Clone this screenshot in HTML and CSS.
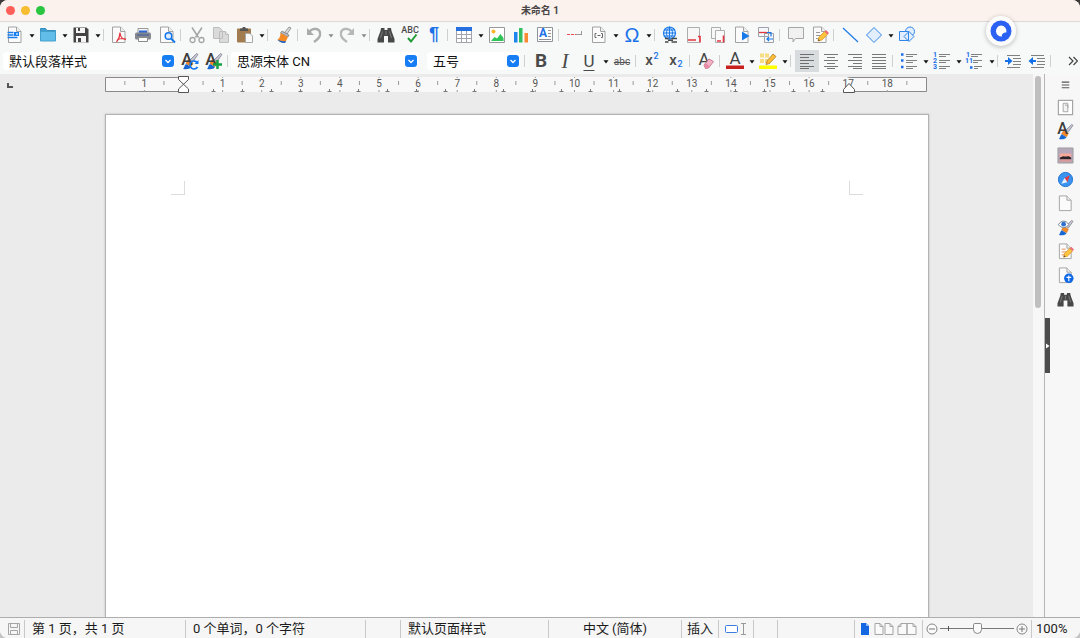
FILE: index.html
```html
<!DOCTYPE html>
<html lang="zh-CN">
<head>
  <meta charset="UTF-8" />
  <meta name="viewport" content="width=device-width, initial-scale=1.0"/>
  <title>未命名 1</title>
  <link rel="stylesheet" href="styles.css">
</head>
<body>

<!-- shared shapes -->
<svg class="sprite" aria-hidden="true">
  <symbol id="doc" viewBox="0 0 18 18"><path d="M2.500 1h8l4.500 4.500v11h-12.500z" fill="#fbfbfb" stroke="#a2a2a2"/><path d="M10.500 1v4.500h4.500" fill="#eee" stroke="#a2a2a2"/></symbol>
  <symbol id="caret" viewBox="0 0 6 4"><path d="M.5.3h5L3 3.500z" fill="currentColor"/></symbol>
  <symbol id="chevron" viewBox="0 0 12 12"><path d="M3.500 5L6 7.500 8.500 5" fill="none" stroke="#fff" stroke-width="1.300"/></symbol>
  <symbol id="brush" viewBox="0 0 18 18"><path d="M15.500 1.500l1.500 1-5 7-2.500-2z" fill="#c5c5d0" stroke="#77778a" stroke-width=".7"/><path d="M7.500 7.500l4.500 3.500-2 3.500-5-3z" fill="#f58b24" stroke="#c9661a" stroke-width=".6"/><path d="M5 12l5 3c-1 2-4 2.500-8 2 1.500-1 1-3.500 3-5z" fill="#1766d2"/></symbol>
  <symbol id="pencil" viewBox="0 0 18 18"><path d="M7 15l1-4L13.500 5.500l3 3-5.500 5.500z" fill="#fbc43c" stroke="#e0952a" stroke-width=".8"/><path d="M13.500 5.500l1.500-1.500 3 3L16.500 8.500z" fill="#ee6b7a"/><path d="M7 15l.5-2 1.500 1.500z" fill="#5d4a35"/></symbol>
  <symbol id="binoculars" viewBox="0 0 18 18"><path d="M4 2h3.500v2h3V2H14l.5 3 3 8v3.500h-6.500V10H7v6.500H.5V13l3-8z" fill="#484848"/><path d="M5.500 5.500L3.500 12M12.500 5.500l2 6.500M9 5v4" stroke="#858585" stroke-width=".8"/></symbol>
  <symbol id="lines-left" viewBox="0 0 18 18"><path d="M2 2.500h14M2 5.500h9M2 8.500h14M2 11.500h9M2 14.500h14M2 16.500h9" stroke="#6e6e6e"/></symbol>
  <symbol id="list-lines" viewBox="0 0 18 18"><path d="M6 2.500h11M6 4.500h7M6 8.500h11M6 10.500h7M6 14.500h11M6 16.500h7" stroke="#808080"/></symbol>
</svg>

<div class="window">
  <header class="titlebar">
    <div class="lights">
      <button class="light close" aria-label="关闭"></button>
      <button class="light minimize" aria-label="最小化"></button>
      <button class="light zoom" aria-label="缩放"></button>
    </div>
    <h1>未命名 1</h1>
  </header>

  <div class="toolbar" role="toolbar" aria-label="标准">
    <button class="tool" aria-label="新建"><svg viewBox="0 0 18 18"><use href="#doc"/><path d="M1.500 6.500h6M1.500 9h6M1.500 11.500h10" stroke="#187ef0" stroke-width="1.300"/><path d="M8 6h5v4H8z" fill="#187ef0"/><path d="M10 7h2v2h-2z" fill="#9ccbff"/></svg></button>
    <button class="drop" aria-label="新建选项"><svg><use href="#caret"/></svg></button>
    <button class="tool" aria-label="打开"><svg viewBox="0 0 18 18"><path d="M1.500 2.500h5l1.500 2h8.500v10h-15z" fill="#3f9fd5" stroke="#378fbe"/><path d="M1.500 5.500H16.500v9.500h-15z" fill="#62bde9" stroke="#439fca"/></svg></button>
    <button class="drop" aria-label="打开选项"><svg><use href="#caret"/></svg></button>
    <button class="tool" aria-label="保存"><svg viewBox="0 0 18 18"><path d="M1.500 1.500h13l2 2v13h-15z" fill="#444"/><path d="M4 2h9v5H4zM4 10h10v6.500H4z" fill="#f5f5f5"/><path d="M6 2h2v3H6zM6 12h3v4H6z" fill="#444"/></svg></button>
    <button class="drop" aria-label="保存选项"><svg><use href="#caret"/></svg></button>
    <span class="sep narrow"></span>
    <button class="tool" aria-label="导出为 PDF"><svg viewBox="0 0 18 18"><use href="#doc"/><path d="M10 6.500c0 4-1.500 7-3.500 9.500M10 7c.5 4 3 6.500 6 6.500M7 14c3-1.500 6-2 9-1" fill="none" stroke="#e5323b" stroke-width="1.200"/></svg></button>
    <button class="tool" aria-label="打印"><svg viewBox="0 0 18 18"><path d="M4 2.500h10v5H4z" fill="#f7f7f7" stroke="#999"/><path d="M5 4.500h8v3H5z" fill="#2d66d5"/><rect x="1" y="6.500" width="16" height="7" rx="1.500" fill="#85888f"/><path d="M3 9h12" stroke="#3c5a9c"/><path d="M4.500 11.500h9v4h-9z" fill="#fff" stroke="#8a8a8a"/></svg></button>
    <button class="tool" aria-label="打印预览"><svg viewBox="0 0 18 18"><use href="#doc"/><circle cx="10.500" cy="10" r="3.300" fill="#dcebff" stroke="#1576e8" stroke-width="1.500"/><path d="M13 12.500l4 4" stroke="#1576e8" stroke-width="2"/></svg></button>
    <span class="sep"></span>
    <button class="tool muted" aria-label="剪切"><svg viewBox="0 0 18 18"><path d="M4 1.500l6.500 10M14 1.500l-6.500 10" stroke="#a4a4a4" stroke-width="1.500"/><circle cx="4.500" cy="14" r="2.500" fill="none" stroke="#a4a4a4" stroke-width="1.300"/><circle cx="13.500" cy="14" r="2.500" fill="none" stroke="#a4a4a4" stroke-width="1.300"/></svg></button>
    <button class="tool muted" aria-label="复制"><svg viewBox="0 0 18 18"><path d="M1.500 1.500h6l3 3v8h-9zM7.500 5.500h6l3 3v8h-9z" fill="#dadada" stroke="#bdbdbd"/><path d="M13.500 5.500v3h3" fill="#eee" stroke="#bdbdbd"/></svg></button>
    <button class="tool" aria-label="粘贴"><svg viewBox="0 0 18 18"><rect x="1" y="2.500" width="14" height="14" rx="1" fill="#a17c4e"/><path d="M4 2.500h2l1-1.500h2l1 1.500h2V5H4z" fill="#555"/><path d="M9.500 7.500h4.500l2.500 2.500v6.500h-7z" fill="#fafafa" stroke="#a8a8a8"/></svg></button>
    <button class="drop" aria-label="粘贴选项"><svg><use href="#caret"/></svg></button>
    <span class="sep"></span>
    <button class="tool" aria-label="克隆格式"><svg viewBox="0 0 18 18"><path d="M14 1l2 1-4 6-2.500-1.500z" fill="#d7d7dd" stroke="#777" stroke-width=".7"/><path d="M7 5l7 4-1 2-7.500-4z" fill="#b9b9c2" stroke="#777" stroke-width=".7"/><path d="M5.500 7l7.500 4-3 6c-3 0-5-1-7.500-3 2-2 3-4 3-7z" fill="#f68b25"/><path d="M2.500 13.500c3 1.500 5 2 8.500 1.500l-1 2c-3 .3-6-1-7.500-3.500z" fill="#1766d2"/></svg></button>
    <span class="sep"></span>
    <button class="tool" aria-label="撤销"><svg viewBox="0 0 18 18"><path d="M4 6c4-5 12-4 11 3-.5 3-3 5-6 7" fill="none" stroke="#aaa" stroke-width="2.300"/><path d="M2 2v7h7z" fill="#aaa"/></svg></button>
    <button class="drop muted" aria-label="撤销选项"><svg><use href="#caret"/></svg></button>
    <button class="tool" aria-label="重做"><svg viewBox="0 0 18 18"><path d="M14 6C10 1 2 2 3 9c.5 3 3 5 6 7" fill="none" stroke="#b7b7b7" stroke-width="2.300"/><path d="M16 2v7H9z" fill="#b7b7b7"/></svg></button>
    <button class="drop muted" aria-label="重做选项"><svg><use href="#caret"/></svg></button>
    <span class="sep"></span>
    <button class="tool" aria-label="查找和替换"><svg><use href="#binoculars"/></svg></button>
    <button class="tool" aria-label="拼写"><svg viewBox="0 0 18 18"><text x="9" y="7" class="t-abc">ABC</text><path d="M7 12l3 3.500L15.500 8.500" fill="none" stroke="#219a38" stroke-width="2"/></svg></button>
    <button class="tool" aria-label="格式标记"><svg viewBox="0 0 18 18"><text x="9" y="14" class="t-mark">¶</text></svg></button>
    <span class="sep"></span>
    <button class="tool" aria-label="插入表格"><svg viewBox="0 0 18 18"><path d="M1.500 1.500h15v15h-15z" fill="#fff" stroke="#a0a5ad"/><path d="M1 1h16v4H1z" fill="#2470e0"/><path d="M1.500 8.500h15M1.500 12.500h15M6.500 5v11.500M11.500 5v11.500" stroke="#a0a5ad"/></svg></button>
    <button class="drop" aria-label="表格选项"><svg><use href="#caret"/></svg></button>
    <button class="tool" aria-label="图像"><svg viewBox="0 0 18 18"><path d="M1.500 1.500h15v15h-15z" fill="#fff" stroke="#999"/><circle cx="5.500" cy="5.500" r="2" fill="#fbb62c"/><path d="M3 15l3.500-4 2.500 1.500 3.500-4.500L15.500 12v3z" fill="#2fc457"/></svg></button>
    <button class="tool" aria-label="图表"><svg viewBox="0 0 18 18"><path d="M2 6h3.500v10.500H2z" fill="#1d86ee"/><path d="M7 2h3.500v14.500H7z" fill="#31bf62"/><path d="M12.500 7H16v9.500h-3.500z" fill="#f68b32"/></svg></button>
    <button class="tool" aria-label="文本框"><svg viewBox="0 0 18 18"><path d="M1.500 1.500h15v14h-15z" fill="#fff" stroke="#8f949b"/><text x="7" y="11" class="t-box">A</text><path d="M12 4.500h3M12 7.500h3M12 10.500h3M3 13.500h12" stroke="#8f949b"/></svg></button>
    <span class="sep"></span>
    <button class="tool" aria-label="分页符"><svg viewBox="0 0 18 18"><path d="M1 8.500h16" stroke="#e94b52" stroke-dasharray="3 1"/><path d="M10 8.500h5.500V5" fill="none" stroke="#999"/></svg></button>
    <button class="tool" aria-label="字段"><svg viewBox="0 0 18 18"><use href="#doc"/><path d="M6.500 7.500H5v4h1.500M11 7.500h1.500v4H11M7.500 9.500h3" fill="none" stroke="#666"/></svg></button>
    <button class="drop" aria-label="字段选项"><svg><use href="#caret"/></svg></button>
    <button class="tool" aria-label="特殊字符"><svg viewBox="0 0 18 18"><text x="9" y="16" class="t-omega">Ω</text></svg></button>
    <button class="drop" aria-label="特殊字符选项"><svg><use href="#caret"/></svg></button>
    <span class="sep narrow"></span>
    <button class="tool" aria-label="超链接"><svg viewBox="0 0 18 18"><circle cx="8.500" cy="7" r="6" fill="#e0f0ff" stroke="#1b78e8" stroke-width="1.200"/><path d="M2.500 7h12M3.500 4h10M3.500 10h10M8.500 1v12M8.500 1c-4 3-4 9 0 12M8.500 1c4 3 4 9 0 12" fill="none" stroke="#1b78e8"/><path d="M4 12.500h3.500M10.500 12.500H16M4 16h3.500M10.500 16H16M7 14.200h5" stroke="#494949" stroke-width="1.500"/></svg></button>
    <button class="tool" aria-label="脚注"><svg viewBox="0 0 18 18"><path d="M2.500 1.500h12v15h-12z" fill="#f7f7f7" stroke="#adadad"/><path d="M3 14h8M13 10.500h2V16.500" fill="none" stroke="#e43640" stroke-width="1.600"/></svg></button>
    <button class="tool" aria-label="尾注"><svg viewBox="0 0 18 18"><path d="M2.500 1.500h9v11h-9z" fill="#f7f7f7" stroke="#adadad"/><path d="M6.500 4.500h9v12h-9z" fill="#fafafa" stroke="#adadad"/><path d="M8 15h4M14.500 9.500v7" stroke="#e43640" stroke-width="1.600"/></svg></button>
    <button class="tool" aria-label="书签"><svg viewBox="0 0 18 18"><use href="#doc"/><path d="M9 5.500l7.500 4.500-7.500 4.500z" fill="#167be9"/></svg></button>
    <button class="tool" aria-label="交叉引用"><svg viewBox="0 0 18 18"><path d="M1.500 1.500h10v9h-10zM7.500 7.500h9v9h-9z" fill="#f5f7fa" stroke="#a0a0a8"/><path d="M2 6.500h8" stroke="#e43640" stroke-width="1.300"/><path d="M10 6.500h4v4M10 13h6M12 11l-2 2 2 2" fill="none" stroke="#1b78e8" stroke-width="1.200"/></svg></button>
    <span class="sep"></span>
    <button class="tool" aria-label="批注"><svg viewBox="0 0 18 18"><path d="M1.500 1.500h15v11H8.500L6 16v-3.500h-4.500z" fill="#f1f1f1" stroke="#a6a6a6"/></svg></button>
    <button class="tool" aria-label="显示修订"><svg viewBox="0 0 18 18"><use href="#doc"/><path d="M5 6.500h4M5 9.500h5M5 12.500h3" stroke="#999"/><use href="#pencil"/></svg></button>
    <span class="sep"></span>
    <button class="tool" aria-label="线条"><svg viewBox="0 0 18 18"><path d="M2 2l15 14" stroke="#1d7bea" stroke-width="1.200"/></svg></button>
    <button class="tool" aria-label="基本形状"><svg viewBox="0 0 18 18"><path d="M9 1.500L16.500 9 9 16.500 1.500 9z" fill="#e2eefb" stroke="#2f85e8"/></svg></button>
    <button class="drop" aria-label="形状选项"><svg><use href="#caret"/></svg></button>
    <button class="tool" aria-label="绘图功能"><svg viewBox="0 0 18 18"><circle cx="12" cy="5.500" r="4.500" fill="#e2eefb" stroke="#2f85e8"/><path d="M1.500 5.500h9v9h-9zM11 5.500l5 5-5 5-5-5z" fill="#e2eefb" stroke="#2f85e8"/></svg></button>
  </div>

  <div class="toolbar" role="toolbar" aria-label="格式">
    <div class="combo style-combo">
      <select aria-label="段落样式"><option>默认段落样式</option></select>
      <svg><use href="#chevron"/></svg>
    </div>
    <button class="tool" aria-label="更新样式"><svg viewBox="0 0 18 18"><use href="#brush"/><text x="6" y="13" class="t-style">A</text><path d="M16.500 11a4 4 0 1 0 0 4" fill="none" stroke="#1678ee" stroke-width="1.700"/><path d="M17.500 8v4h-4z" fill="#1678ee"/></svg></button>
    <button class="tool" aria-label="新建样式"><svg viewBox="0 0 18 18"><use href="#brush"/><text x="6" y="13" class="t-style">A</text><path d="M12.500 8v9M8 12.500h9" stroke="#17a042" stroke-width="2.500"/></svg></button>
    <span class="sep narrow"></span>
    <div class="combo font-combo">
      <select aria-label="字体名称"><option>思源宋体 CN</option></select>
      <svg><use href="#chevron"/></svg>
    </div>
    <div class="combo size-combo">
      <select aria-label="字号"><option>五号</option></select>
      <svg><use href="#chevron"/></svg>
    </div>
    <span class="sep"></span>
    <button class="tool letter bold" aria-label="粗体">B</button>
    <button class="tool letter italic" aria-label="斜体">I</button>
    <button class="tool letter underline" aria-label="下划线">U</button>
    <button class="drop" aria-label="下划线选项"><svg><use href="#caret"/></svg></button>
    <button class="tool strike" aria-label="删除线">abc</button>
    <span class="sep"></span>
    <button class="tool" aria-label="上标"><svg viewBox="0 0 18 18"><text x="6" y="13" class="t-x">x</text><text x="13" y="7" class="t-two">2</text></svg></button>
    <button class="tool" aria-label="下标"><svg viewBox="0 0 18 18"><text x="6" y="13" class="t-x">x</text><text x="13" y="15" class="t-two">2</text></svg></button>
    <span class="sep"></span>
    <button class="tool" aria-label="清除格式"><svg viewBox="0 0 18 18"><text x="7" y="13" class="t-a">A</text><path d="M7 13l5-6 4.500 2.500-5 6.500-3 .5z" fill="#f6b3c7" stroke="#b5637e" stroke-width=".8"/><path d="M7 13l1.500-2 4.500 3.500-1.500 1.500-3 .5z" fill="#e58ba8"/></svg></button>
    <span class="sep narrow"></span>
    <button class="tool" aria-label="字体颜色"><svg viewBox="0 0 18 18"><text x="9" y="12" class="t-a">A</text><path d="M0 13.500h18V17H0z" fill="#c9211e"/></svg></button>
    <button class="drop" aria-label="字体颜色选项"><svg><use href="#caret"/></svg></button>
    <button class="tool" aria-label="突出显示颜色"><svg viewBox="0 0 18 18"><path d="M1 1.500h4v4H1zM6 1.500h4v4H6zM1 7h4v4H1zM6 7h3v4H6z" fill="#f8dc82"/><path d="M7 12.500l1-3.500 6-7 3 2.500-6.500 7z" fill="#fcbd37" stroke="#b37a26" stroke-width=".8"/><path d="M0 13.500h18V17H0z" fill="#ff0"/></svg></button>
    <button class="drop" aria-label="突出显示选项"><svg><use href="#caret"/></svg></button>
    <span class="sep"></span>
    <button class="tool active" aria-label="左对齐" aria-pressed="true"><svg><use href="#lines-left"/></svg></button>
    <button class="tool" aria-label="居中"><svg viewBox="0 0 18 18"><path d="M2 2.500h14M5 5.500h8M2 8.500h14M5 11.500h8M2 14.500h14M5 16.500h8" stroke="#777"/></svg></button>
    <button class="tool" aria-label="右对齐"><svg viewBox="0 0 18 18"><path d="M2 2.500h14M7 5.500h9M2 8.500h14M7 11.500h9M2 14.500h14M7 16.500h9" stroke="#777"/></svg></button>
    <button class="tool" aria-label="两端对齐"><svg viewBox="0 0 18 18"><path d="M2 2.500h14M2 5.500h14M2 8.500h14M2 11.500h14M2 14.500h14M2 16.500h14" stroke="#777"/></svg></button>
    <span class="sep"></span>
    <button class="tool" aria-label="项目符号"><svg viewBox="0 0 18 18"><use href="#list-lines"/><path d="M1 2.500h2.500M1 8.500h2.500M1 15h2.500" stroke="#1b6ee8" stroke-width="2.500"/></svg></button>
    <button class="drop" aria-label="项目符号选项"><svg><use href="#caret"/></svg></button>
    <button class="tool" aria-label="编号"><svg viewBox="0 0 18 18"><use href="#list-lines"/><text x="2" y="5" class="t-num">1</text><text x="2" y="11" class="t-num">2</text><text x="2" y="17" class="t-num">3</text></svg></button>
    <button class="drop" aria-label="编号选项"><svg><use href="#caret"/></svg></button>
    <button class="tool" aria-label="大纲"><svg viewBox="0 0 18 18"><path d="M5 2.500h11M5 4.500h7M7 8.500h9M7 10.500h5M8 14.500h8M8 16.500h4" stroke="#808080"/><text x="2" y="5" class="t-num">1</text><text x="3" y="11" class="t-num">11</text><path d="M4 15.500h2.500" stroke="#1b6ee8" stroke-width="2.500"/></svg></button>
    <button class="drop" aria-label="大纲选项"><svg><use href="#caret"/></svg></button>
    <span class="sep narrow"></span>
    <button class="tool" aria-label="增加缩进"><svg viewBox="0 0 18 18"><path d="M3 3.500h13M9 6.500h8M9 9.500h8M9 12.500h8M3 15.500h13" stroke="#808080"/><path d="M1 8h3V5l4.500 4L4 13v-3H1z" fill="#136fe6"/></svg></button>
    <button class="tool" aria-label="减少缩进"><svg viewBox="0 0 18 18"><path d="M3 3.500h13M9 6.500h8M9 9.500h8M9 12.500h8M3 15.500h13" stroke="#808080"/><path d="M8 8H5V5L.5 9 5 13v-3h3z" fill="#136fe6"/></svg></button>
    <span class="sep"></span>
    <button class="more" aria-label="更多"><svg viewBox="0 0 10 10"><path d="M1 1l4 4-4 4M5.500 1l4 4-4 4" fill="none" stroke="#444" stroke-width="1.200"/></svg></button>
  </div>

  <main class="workspace">
    <div class="canvas">
      <div class="ruler-row">
        <svg class="tab-type" viewBox="0 0 6 6"><path d="M1 1v4h5" fill="none" stroke="#555" stroke-width="2"/></svg>
        <svg class="ruler" id="ruler" viewBox="0 0 822 18">
          <path d="M78 1h666v15H78z" fill="#f8f8f8"/>
          <path d="M78 1.500H.5v14H78M744 1.500h77.500v14H744" fill="#f8f8f8" stroke="#8a8a8a"/>
          <g id="rulerMarks"></g>
          <path d="M73.500.5h10v3L73.500 13v3.500h10V13L73.500 3.500z" fill="#fff" stroke="#555"/>
          <path d="M744 7.500l5.500 6v3h-11v-3z" fill="#fff" stroke="#555"/>
        </svg>
      </div>
      <article class="page" contenteditable="true" spellcheck="false" aria-label="文档">
        <div class="crops"><span class="crop left"></span><span class="crop right"></span></div>
      </article>
    </div>

    <div class="scrollbar"><div class="thumb"></div></div>

    <aside class="sidebar">
      <button class="side-toggle" aria-label="隐藏侧边栏"><svg viewBox="0 0 5 6"><path d="M1 .5v5L4.500 3z" fill="#fff"/></svg></button>
      <button class="side menu" aria-label="侧边栏设置"><svg viewBox="0 0 18 18"><path d="M5 6.500h8M5 9.500h8M5 12.500h8" stroke="#555" stroke-width="1.200"/></svg></button>
      <button class="side" aria-label="属性"><svg viewBox="0 0 18 18"><path d="M1.500 1.500h15v15h-15z" fill="#fff" stroke="#a5a5a5" stroke-width="1.300"/><path d="M6.500 4.500h5v9h-5zM8.500 6.500h3v3" fill="#f2f2f2" stroke="#a5a5a5"/></svg></button>
      <button class="side" aria-label="样式"><svg viewBox="0 0 18 18"><use href="#brush"/><text x="6" y="12" class="t-style">A</text></svg></button>
      <button class="side" aria-label="图库"><svg viewBox="0 0 18 18"><path d="M1 1h16v16H1z" fill="#b7a7bb" stroke="#9d9d9d"/><path d="M3 7h12v4H3z" fill="#f7a89a"/><path d="M3 11.500c2-1 3-2 5-1.500s4-1.500 7 1.500v2H3z" fill="#2a222b"/><path d="M3 13h12v2.500H3z" fill="#d99b9a"/></svg></button>
      <button class="side" aria-label="导航"><svg viewBox="0 0 18 18"><circle cx="9" cy="9" r="7.500" fill="#3b94f0" stroke="#1b70d0"/><path d="M13.500 4.500L11 12 8 7.500z" fill="#e33b42"/><path d="M8 7.500L11 12l-6.500 1.500z" fill="#e8f2ff"/></svg></button>
      <button class="side" aria-label="页面"><svg><use href="#doc"/></svg></button>
      <button class="side" aria-label="样式检查器"><svg viewBox="0 0 18 18"><use href="#brush"/><path d="M1.500 6c3-5 8-5 11 0-3 4-8 4-11 0z" fill="#fff" stroke="#6d7f96"/><circle cx="7" cy="5.500" r="2.500" fill="#2f70cf"/></svg></button>
      <button class="side" aria-label="修订管理"><svg viewBox="0 0 18 18"><use href="#doc"/><path d="M5 6.500h4M5 9.500h5M5 12.500h3" stroke="#e08c52"/><use href="#pencil"/></svg></button>
      <button class="side" aria-label="无障碍检查"><svg viewBox="0 0 18 18"><use href="#doc"/><circle cx="12.500" cy="12" r="5" fill="#0f68e6"/><path d="M10 11h5M12.500 9v6" stroke="#fff" stroke-width="1.200"/></svg></button>
      <button class="side" aria-label="查找"><svg><use href="#binoculars"/></svg></button>
    </aside>
  </main>

  <footer class="statusbar">
    <button class="cell save-state" aria-label="文档已保存"><svg viewBox="0 0 14 14"><path d="M1.500 1.500h11v11h-11zM3.500 1.500v4h7v-4M3.500 12.500v-4h7v4" fill="none" stroke="#a5a5a5"/></svg></button>
    <span class="cell pages">第 1 页，共 1 页</span>
    <span class="cell words">0 个单词，0 个字符</span>
    <span class="cell blank"></span>
    <span class="cell page-style">默认页面样式</span>
    <span class="cell language">中文 (简体)</span>
    <span class="cell insert">插入</span>
    <button class="cell selection" aria-label="标准选择"><svg viewBox="0 0 24 14"><rect x="1.500" y="3.500" width="12" height="7" rx="1" fill="#fff" stroke="#3b7de0"/><path d="M17 1.500h5M17 12.500h5M19.500 1.500v11" stroke="#999"/></svg></button>
    <span class="cell sign"></span>
    <span class="cell filler"></span>
    <div class="cell views">
      <button aria-label="单页视图"><svg class="one" viewBox="0 0 12 14"><path d="M2 1h5l3 3v9H2z" fill="#1568e2"/><path d="M7 1v3h3z" fill="#8fbcf8"/></svg></button>
      <button aria-label="多页视图"><svg viewBox="0 0 20 14"><path d="M1 1.500h5l3 3v8H1zM11 1.500h5l3 3v8h-8z" fill="#fafafa" stroke="#a5a5a5"/><path d="M6 1.500v3h3M16 1.500v3h3" fill="none" stroke="#a5a5a5"/></svg></button>
      <button aria-label="书本视图"><svg viewBox="0 0 20 14"><path d="M10 1.500v11H1v-8l3-3zM10 1.500v11h9v-8l-3-3z" fill="#fafafa" stroke="#a5a5a5"/><path d="M4 1.500v3H1M16 1.500v3h3" fill="none" stroke="#a5a5a5"/></svg></button>
    </div>
    <div class="cell zoomer">
      <button aria-label="缩小"><svg viewBox="0 0 12 12"><circle cx="6" cy="6" r="5" fill="#fafafa" stroke="#858585"/><path d="M3 6h6" stroke="#777"/></svg></button>
      <div class="track"><input type="range" min="0" max="100" value="50" aria-label="缩放"></div>
      <button aria-label="放大"><svg viewBox="0 0 12 12"><circle cx="6" cy="6" r="5" fill="#fafafa" stroke="#858585"/><path d="M3 6h6M6 3v6" stroke="#777"/></svg></button>
    </div>
    <span class="cell percent">100%</span>
  </footer>

  <button class="assistant" aria-label="助手"><svg viewBox="0 0 22 22"><circle cx="11" cy="11" r="10.500" fill="#2b62f3"/><path d="M11 5.500a5.500 5.500 0 1 0 1 11c-.5-2 1-4 4.300-4A5.500 5.500 0 0 0 11 5.500z" fill="#fff"/></svg></button>
</div>

<script>
  // 标尺：零点在左页边距处
  const origin = 78.5;
  const cm = 39.1;
  let marks = "";

  for (let n = -1; n <= 18; n++) {
    const x = origin + n * cm;
    if (n !== 0) {
      marks += `<text x="${x}" y="11">${Math.abs(n)}</text>`;
      marks += `<path d="M${x} 1v1M${x} 14v2"/>`;
    }
    marks += `<path d="M${x + cm / 2} 5v4"/>`;
  }
  marks += `<path d="M${origin - cm * 1.5} 5v4"/>`;

  // 默认制表位
  for (let i = 0; i < 22; i++) {
    marks += `<path class="tab" d="M${108 + i * 29}.5 13v3m-2 -.5h4"/>`;
  }

  document.getElementById("rulerMarks").innerHTML = marks;
</script>

</body>
</html>
```

FILE: styles.css
```css
* { box-sizing: border-box; }

body {
  margin: 0;
  font-family: Roboto, "Noto Sans CJK SC", sans-serif;
  font-size: 13px;
  color: #1c1c1c;
  background: linear-gradient(to bottom, #3b3a36 50%, #c4c4c4 50%);
}

button {
  padding: 0;
  border: none;
  background: none;
  color: inherit;
  font-family: inherit;
  display: flex;
  align-items: center;
  justify-content: center;
}

svg { display: block; }

.sprite {
  position: absolute;
  width: 0;
  height: 0;
}

.window {
  position: relative;
  display: flex;
  flex-direction: column;
  height: 100vh;
  border-radius: 8px;
  overflow: hidden;
  background: #f7f7f7;
}

/* title bar */
.titlebar {
  display: grid;
  grid-template-columns: 1fr auto 1fr;
  align-items: center;
  flex: 0 0 22px;
  padding: 0 6px;
  background: #fbf1ed;
  border-bottom: 1px solid #dcd9d7;
}

.titlebar h1 {
  margin: 0;
  font-size: 10px;
  line-height: 20px;
  font-weight: bold;
  color: #4a4645;
}

.lights {
  display: flex;
  gap: 6px;
}

.light {
  width: 9px;
  height: 9px;
  border-radius: 50%;
}

.close { background: #fe5f58; }
.minimize { background: #f8bc30; }
.zoom { background: #2ac541; }

/* toolbars */
.toolbar {
  display: flex;
  align-items: center;
  flex: 0 0 26px;
  padding: 0 2px 0 3px;
  background: #f7f8f8;
}

.tool {
  flex: 0 0 24px;
  height: 22px;
}

.tool svg {
  width: 18px;
  height: 18px;
}

.tool.active { background: #d8dcdf; }

.drop {
  flex: 0 0 9px;
  height: 22px;
  color: #111;
}

.drop svg {
  width: 6px;
  height: 4px;
  margin-top: 2px;
}

.drop.muted { color: #888; }

.sep {
  flex: 0 0 5px;
  height: 12px;
  margin-left: 1px;
  border-left: 1px solid #cfcfcf;
}

.sep.narrow { flex-basis: 4px; }

.combo {
  position: relative;
  height: 18px;
}

.combo select {
  appearance: none;
  width: 100%;
  height: 18px;
  padding: 0 20px 0 6px;
  border: none;
  border-radius: 4px;
  background: #fff;
  color: #111;
  font-family: inherit;
  font-size: 13px;
}

.combo svg {
  position: absolute;
  right: 1px;
  top: 3px;
  width: 12px;
  height: 12px;
  border-radius: 3px;
  background: #167df5;
  pointer-events: none;
}

.style-combo { flex: 0 0 172px; margin-right: 3px; }
.font-combo { flex: 0 0 187px; margin-right: 9px; }
.size-combo { flex: 0 0 93px; margin-right: 3px; }

.letter {
  font-size: 19px;
  line-height: 20px;
  color: #4a4a4a;
}

.bold { font-weight: bold; }
.italic { font-family: "Liberation Serif", serif; font-style: italic; font-size: 21px; }
.underline { font-size: 17px; text-decoration: underline 1px; text-underline-offset: 3px; }
.strike { font-size: 10px; color: #555; text-decoration: line-through; }

.more {
  margin-left: auto;
  width: 10px;
  height: 22px;
}

.more svg {
  width: 10px;
  height: 10px;
}

svg text { font-family: Roboto, sans-serif; text-anchor: middle; }
.t-abc { font-size: 9px; font-weight: 500; fill: #4a4a4a; }
svg .t-mark { font-family: "Liberation Sans", sans-serif; font-size: 18px; font-weight: bold; fill: #1a72e8; }
.t-box { font-size: 12px; font-weight: bold; fill: #1a72e8; }
svg .t-omega { font-family: "Liberation Sans", sans-serif; font-size: 20px; fill: #1a72e8; }
.t-style { font-size: 17px; font-weight: 500; fill: #3d3d3d; }
.t-x { font-size: 15px; font-weight: 500; fill: #4a4a4a; }
.t-two { font-size: 9px; font-weight: 500; fill: #1a72e8; }
.t-a { font-size: 17px; fill: #444; }
.t-num { font-size: 7px; font-weight: bold; fill: #1b6ee8; }

.tool svg, .side svg { overflow: visible; }

/* document area */
.workspace {
  display: flex;
  flex: 1;
  min-height: 0;
}

.canvas {
  flex: 1;
  display: flex;
  flex-direction: column;
  background: #ebebeb;
  overflow: hidden;
}

.ruler-row {
  display: grid;
  grid-template-columns: 1fr 824px 1fr;
  flex: 0 0 40px;
  padding-top: 2px;
}

.tab-type {
  width: 6px;
  height: 6px;
  margin: 6px 0 0 7px;
}

.ruler {
  width: 822px;
  height: 18px;
}

.ruler g path { fill: none; stroke: #9a9a9a; }
.ruler g .tab { stroke: #777; }
.ruler text { font-size: 10px; fill: #555; }

.page {
  flex: 1;
  width: 824px;
  margin: 0 auto;
  padding: 66px 65px;
  background: #fff;
  border: 1px solid #b3b3b3;
  border-bottom: none;
  box-shadow: 0 0 2px #bbb;
  outline: none;
}

.crops {
  display: flex;
  justify-content: space-between;
}

.crop {
  width: 14px;
  height: 14px;
  border-bottom: 1px solid #dcdcdc;
}

.crop.left { border-right: 1px solid #dcdcdc; }
.crop.right { border-left: 1px solid #dcdcdc; }

.scrollbar {
  flex: 0 0 11px;
  padding: 2px;
  background: #f7f7f7;
  border-right: 1px solid #b5b5b5;
}

.thumb {
  width: 6px;
  height: 43%;
  border-radius: 3px;
  background: #bfbfbf;
}

.sidebar {
  position: relative;
  flex: 0 0 35px;
  padding-left: 6px;
  background: #f7f7f7;
}

.scrollbar { flex-basis: 12px; padding-right: 3px; padding-left: 2px; }
.sidebar { flex-basis: 34px; padding-left: 5px; }

.side {
  width: 30px;
  height: 24px;
}

.side.menu { height: 21px; }

.side svg {
  width: 17px;
  height: 17px;
}

.side-toggle {
  position: absolute;
  left: 0;
  top: 45%;
  width: 5px;
  height: 55px;
  background: #4c4c4c;
}

.side-toggle svg {
  width: 5px;
  height: 6px;
}

/* status bar */
.statusbar {
  display: flex;
  align-items: center;
  flex: 0 0 21px;
  padding-top: 1px;
  border-top: 1px solid #adadad;
  background: #f6f6f6;
}

.cell {
  display: flex;
  align-items: center;
  height: 18px;
  padding: 0 7px;
  border-right: 1px solid #c9c9c9;
  line-height: 18px;
  white-space: nowrap;
}

.save-state { width: 25px; padding: 0 0 0 3px; }
.save-state svg { width: 14px; height: 14px; }
.pages { width: 161px; }
.words { width: 180px; }
.blank { width: 35px; }
.page-style { width: 148px; }
.language { width: 133px; justify-content: center; }
.insert { width: 37px; padding: 0 5px; }
.selection { width: 35px; }
.selection svg { width: 24px; height: 14px; flex: none; }
.sign { width: 24px; }
.filler { flex: 1; }

.views {
  width: 68px;
  padding: 0 4px;
  gap: 3px;
}

.views svg { width: 20px; height: 14px; }
.views .one { width: 12px; }

.zoomer {
  width: 109px;
  padding: 0 3px;
}

.zoomer svg { width: 12px; height: 12px; }

.track { flex: 1; }

.track input {
  appearance: none;
  display: block;
  width: 100%;
  height: 12px;
  margin: 0;
  background:
    linear-gradient(#555, #555) 10px center / 1px 5px no-repeat,
    linear-gradient(#777, #777) center / 74px 1px no-repeat;
}

.track input::-webkit-slider-thumb {
  appearance: none;
  width: 9px;
  height: 11px;
  border: 1px solid #8a8a8a;
  border-radius: 2px 2px 5px 5px;
  background: #fafafa;
}

.percent {
  width: 48px;
  padding: 0 4px;
  border-right: none;
}

/* floating assistant */
.assistant {
  position: absolute;
  right: 64px;
  top: 16px;
  width: 30px;
  height: 30px;
  border-radius: 50%;
  background: #fbfbfb;
  box-shadow: 0 1px 5px rgba(0, 0, 0, 0.25);
}

.assistant svg {
  width: 22px;
  height: 22px;
}
```
